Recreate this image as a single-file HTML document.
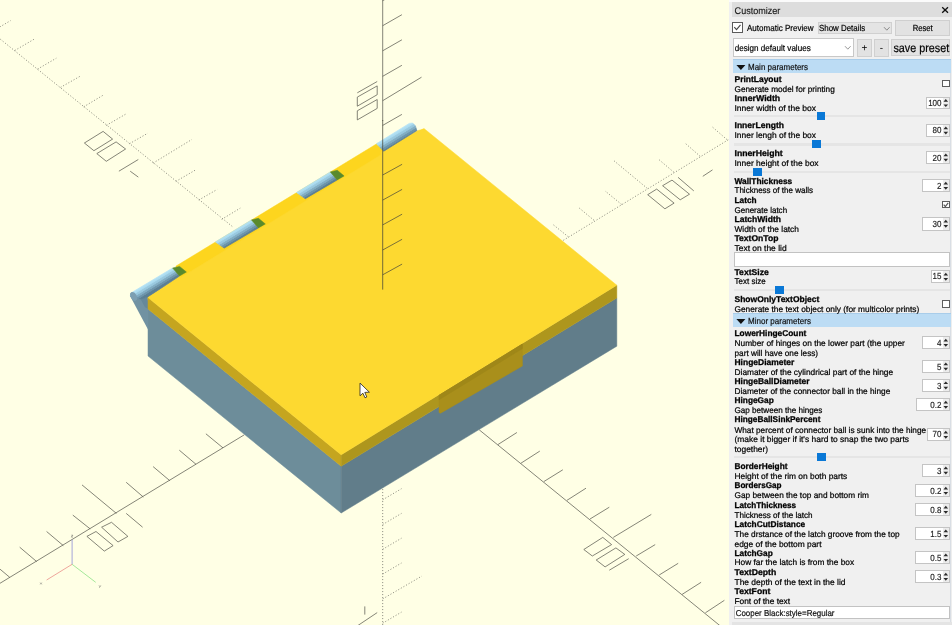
<!DOCTYPE html>
<html><head><meta charset="utf-8"><title>OpenSCAD</title>
<style>
html,body{margin:0;padding:0;}
body{width:952px;height:625px;overflow:hidden;position:relative;background:#f0f0f0;font-family:"Liberation Sans",sans-serif;}
#vp{position:absolute;left:0;top:0;width:729px;height:625px;background:#ffffe5;overflow:hidden}
#sep{position:absolute;left:731.6px;top:59px;width:1px;height:566px;background:#c3cfdc}
#panel{position:absolute;left:729px;top:0;width:223px;height:625px;background:#f0f0f0}
#edge{position:absolute;left:950.4px;top:59px;width:1.6px;height:566px;background:#eeeeee;border-left:1px solid #d9dee4;box-sizing:border-box}
#tx{position:absolute;left:0;top:0;font-family:"Liberation Sans",sans-serif;text-rendering:geometricPrecision;will-change:transform;}
</style></head><body>
<div id="vp"><svg width="731" height="625" viewBox="0 0 731 625">
<line x1="-2.0" y1="584.5" x2="244.3" y2="434.8" stroke="#505048" stroke-width="0.7" stroke-opacity="1"/>
<line x1="9.8" y1="577.4" x2="-7.2" y2="563.1" stroke="#505048" stroke-width="0.7" stroke-opacity="1"/>
<line x1="36.7" y1="561.6" x2="19.7" y2="547.2" stroke="#505048" stroke-width="0.7" stroke-opacity="1"/>
<line x1="63.3" y1="545.6" x2="46.6" y2="531.5" stroke="#505048" stroke-width="0.7" stroke-opacity="1"/>
<line x1="90.2" y1="528.9" x2="72.8" y2="515.1" stroke="#505048" stroke-width="0.7" stroke-opacity="1"/>
<line x1="116.4" y1="513.4" x2="82.0" y2="484.9" stroke="#505048" stroke-width="0.7" stroke-opacity="1"/>
<line x1="143.3" y1="497.0" x2="126.2" y2="482.3" stroke="#505048" stroke-width="0.7" stroke-opacity="1"/>
<line x1="169.8" y1="480.7" x2="153.1" y2="466.6" stroke="#505048" stroke-width="0.7" stroke-opacity="1"/>
<line x1="196.0" y1="464.3" x2="179.3" y2="450.2" stroke="#505048" stroke-width="0.7" stroke-opacity="1"/>
<line x1="223.0" y1="447.9" x2="205.9" y2="433.8" stroke="#505048" stroke-width="0.7" stroke-opacity="1"/>
<line x1="126.2" y1="513.4" x2="142.6" y2="527.2" stroke="#505048" stroke-width="0.7" stroke-opacity="1"/>
<polygon points="101.6,527.2 111.5,522.3 127.9,536.4 118.0,542.0" fill="none" stroke="#505048" stroke-width="0.7"/>
<polygon points="86.9,536.4 96.0,531.5 113.1,545.6 104.3,551.1" fill="none" stroke="#505048" stroke-width="0.7"/>
<line x1="479.2" y1="429.8" x2="721.0" y2="626.5" stroke="#505048" stroke-width="0.7" stroke-opacity="1"/>
<line x1="497.9" y1="444.6" x2="516.9" y2="432.5" stroke="#505048" stroke-width="0.7" stroke-opacity="1"/>
<line x1="520.8" y1="463.3" x2="539.8" y2="451.1" stroke="#505048" stroke-width="0.7" stroke-opacity="1"/>
<line x1="543.8" y1="481.6" x2="562.8" y2="469.8" stroke="#505048" stroke-width="0.7" stroke-opacity="1"/>
<line x1="567.0" y1="500.3" x2="586.0" y2="488.2" stroke="#505048" stroke-width="0.7" stroke-opacity="1"/>
<line x1="590.0" y1="519.0" x2="609.3" y2="507.2" stroke="#505048" stroke-width="0.7" stroke-opacity="1"/>
<line x1="613.3" y1="537.4" x2="651.3" y2="514.4" stroke="#505048" stroke-width="0.7" stroke-opacity="1"/>
<line x1="636.2" y1="556.0" x2="655.2" y2="544.6" stroke="#505048" stroke-width="0.7" stroke-opacity="1"/>
<line x1="659.2" y1="575.0" x2="678.2" y2="563.3" stroke="#505048" stroke-width="0.7" stroke-opacity="1"/>
<line x1="682.1" y1="594.4" x2="701.1" y2="582.3" stroke="#505048" stroke-width="0.7" stroke-opacity="1"/>
<line x1="705.4" y1="612.8" x2="724.4" y2="600.3" stroke="#505048" stroke-width="0.7" stroke-opacity="1"/>
<polygon points="583.8,549.5 602.8,537.4 611.6,544.6 592.3,556.0" fill="none" stroke="#505048" stroke-width="0.7"/>
<polygon points="596.2,560.0 615.9,547.9 624.8,554.4 605.1,566.9" fill="none" stroke="#505048" stroke-width="0.7"/>
<line x1="609.3" y1="570.2" x2="628.7" y2="558.7" stroke="#505048" stroke-width="0.7" stroke-opacity="1"/>
<line x1="-2.0" y1="37.3" x2="232.2" y2="226.4" stroke="#74746a" stroke-width="0.8" stroke-dasharray="1.1 1.9" stroke-opacity="1"/>
<line x1="-8.0" y1="31.5" x2="10.6" y2="20.6" stroke="#74746a" stroke-width="0.8" stroke-dasharray="1.1 1.9" stroke-opacity="1"/>
<line x1="14.8" y1="50.5" x2="34.1" y2="39.2" stroke="#74746a" stroke-width="0.8" stroke-dasharray="1.1 1.9" stroke-opacity="1"/>
<line x1="37.6" y1="69.1" x2="56.3" y2="58.2" stroke="#74746a" stroke-width="0.8" stroke-dasharray="1.1 1.9" stroke-opacity="1"/>
<line x1="60.5" y1="87.4" x2="80.2" y2="76.2" stroke="#74746a" stroke-width="0.8" stroke-dasharray="1.1 1.9" stroke-opacity="1"/>
<line x1="83.7" y1="106.8" x2="103.1" y2="95.2" stroke="#74746a" stroke-width="0.8" stroke-dasharray="1.1 1.9" stroke-opacity="1"/>
<line x1="106.3" y1="125.4" x2="125.6" y2="114.2" stroke="#74746a" stroke-width="0.8" stroke-dasharray="1.1 1.9" stroke-opacity="1"/>
<line x1="129.5" y1="143.7" x2="147.8" y2="133.2" stroke="#74746a" stroke-width="0.8" stroke-dasharray="1.1 1.9" stroke-opacity="1"/>
<line x1="153.1" y1="163.1" x2="191.8" y2="139.5" stroke="#74746a" stroke-width="0.8" stroke-dasharray="1.1 1.9" stroke-opacity="1"/>
<line x1="175.9" y1="181.4" x2="195.3" y2="170.1" stroke="#74746a" stroke-width="0.8" stroke-dasharray="1.1 1.9" stroke-opacity="1"/>
<line x1="198.8" y1="200.0" x2="217.1" y2="189.5" stroke="#74746a" stroke-width="0.8" stroke-dasharray="1.1 1.9" stroke-opacity="1"/>
<line x1="221.7" y1="219.4" x2="240.3" y2="208.1" stroke="#74746a" stroke-width="0.8" stroke-dasharray="1.1 1.9" stroke-opacity="1"/>
<polygon points="84.4,143.0 103.1,131.4 112.6,139.1 93.9,150.7" fill="none" stroke="#505048" stroke-width="0.7"/>
<polygon points="96.8,153.6 116.1,141.9 125.6,149.0 106.3,161.3" fill="none" stroke="#505048" stroke-width="0.7"/>
<line x1="118.9" y1="171.2" x2="138.3" y2="159.5" stroke="#505048" stroke-width="0.7" stroke-opacity="1"/>
<line x1="130.2" y1="171.2" x2="138.3" y2="177.1" stroke="#505048" stroke-width="0.7" stroke-opacity="1"/>
<line x1="563.3" y1="240.3" x2="730.5" y2="138.4" stroke="#74746a" stroke-width="0.8" stroke-dasharray="1.1 1.9" stroke-opacity="1"/>
<line x1="568.4" y1="236.9" x2="552.5" y2="224.1" stroke="#74746a" stroke-width="0.8" stroke-dasharray="1.1 1.9" stroke-opacity="1"/>
<line x1="594.0" y1="220.3" x2="578.6" y2="207.5" stroke="#74746a" stroke-width="0.8" stroke-dasharray="1.1 1.9" stroke-opacity="1"/>
<line x1="621.6" y1="204.4" x2="605.0" y2="190.9" stroke="#74746a" stroke-width="0.8" stroke-dasharray="1.1 1.9" stroke-opacity="1"/>
<line x1="647.2" y1="188.3" x2="613.2" y2="160.1" stroke="#74746a" stroke-width="0.8" stroke-dasharray="1.1 1.9" stroke-opacity="1"/>
<line x1="673.8" y1="172.2" x2="658.7" y2="159.4" stroke="#74746a" stroke-width="0.8" stroke-dasharray="1.1 1.9" stroke-opacity="1"/>
<line x1="700.2" y1="156.3" x2="684.9" y2="143.0" stroke="#74746a" stroke-width="0.8" stroke-dasharray="1.1 1.9" stroke-opacity="1"/>
<line x1="727.1" y1="139.7" x2="711.7" y2="126.4" stroke="#74746a" stroke-width="0.8" stroke-dasharray="1.1 1.9" stroke-opacity="1"/>
<polygon points="647.7,194.7 656.7,189.1 674.1,203.1 664.9,208.8" fill="none" stroke="#505048" stroke-width="0.7"/>
<polygon points="662.6,185.7 672.0,180.1 689.5,194.2 680.2,199.8" fill="none" stroke="#505048" stroke-width="0.7"/>
<line x1="678.0" y1="177.3" x2="693.8" y2="190.9" stroke="#505048" stroke-width="0.7" stroke-opacity="1"/>
<line x1="702.8" y1="176.3" x2="712.5" y2="169.9" stroke="#505048" stroke-width="0.7" stroke-opacity="1"/>
<line x1="382.7" y1="489.0" x2="382.7" y2="626.0" stroke="#74746a" stroke-width="0.8" stroke-dasharray="1.1 1.9" stroke-opacity="1"/>
<line x1="382.7" y1="499.8" x2="401.5" y2="488.7" stroke="#74746a" stroke-width="0.8" stroke-dasharray="1.1 1.9" stroke-opacity="1"/>
<line x1="382.7" y1="524.5" x2="401.5" y2="513.4" stroke="#74746a" stroke-width="0.8" stroke-dasharray="1.1 1.9" stroke-opacity="1"/>
<line x1="382.7" y1="549.3" x2="401.5" y2="538.2" stroke="#74746a" stroke-width="0.8" stroke-dasharray="1.1 1.9" stroke-opacity="1"/>
<line x1="382.7" y1="574.1" x2="401.5" y2="563.0" stroke="#74746a" stroke-width="0.8" stroke-dasharray="1.1 1.9" stroke-opacity="1"/>
<line x1="382.7" y1="623.2" x2="401.5" y2="612.1" stroke="#74746a" stroke-width="0.8" stroke-dasharray="1.1 1.9" stroke-opacity="1"/>
<line x1="382.7" y1="598.9" x2="421.8" y2="576.1" stroke="#74746a" stroke-width="0.8" stroke-dasharray="1.1 1.9" stroke-opacity="1"/>
<line x1="364.8" y1="606.4" x2="364.8" y2="614.6" stroke="#505048" stroke-width="0.7" stroke-opacity="1"/>
<line x1="357.9" y1="625.5" x2="377.2" y2="612.6" stroke="#505048" stroke-width="0.7" stroke-opacity="1"/>
<line x1="382.7" y1="-1.0" x2="382.7" y2="121.0" stroke="#505048" stroke-width="0.7" stroke-opacity="1"/>
<line x1="382.7" y1="0.7" x2="401.9" y2="-10.3" stroke="#505048" stroke-width="0.7" stroke-opacity="1"/>
<line x1="382.7" y1="25.7" x2="401.9" y2="14.7" stroke="#505048" stroke-width="0.7" stroke-opacity="1"/>
<line x1="382.7" y1="50.8" x2="401.9" y2="39.8" stroke="#505048" stroke-width="0.7" stroke-opacity="1"/>
<line x1="382.7" y1="76.3" x2="401.9" y2="65.3" stroke="#505048" stroke-width="0.7" stroke-opacity="1"/>
<line x1="382.7" y1="125.4" x2="401.9" y2="114.4" stroke="#505048" stroke-width="0.7" stroke-opacity="1"/>
<line x1="382.7" y1="100.7" x2="421.5" y2="77.2" stroke="#505048" stroke-width="0.7" stroke-opacity="1"/>
<line x1="357.3" y1="92.8" x2="377.2" y2="81.5" stroke="#505048" stroke-width="0.7" stroke-opacity="1"/>
<polygon points="357.3,97.1 377.2,85.9 377.2,94.7 357.3,106.2" fill="none" stroke="#505048" stroke-width="0.7"/>
<polygon points="357.3,110.8 377.2,99.5 377.2,108.4 357.3,119.9" fill="none" stroke="#505048" stroke-width="0.7"/>
<line x1="72.1" y1="564.3" x2="72.1" y2="539.7" stroke="#6666d0" stroke-width="0.6" stroke-opacity="1"/>
<line x1="72.1" y1="564.3" x2="46.6" y2="580.0" stroke="#e36a6a" stroke-width="0.6" stroke-opacity="1"/>
<line x1="72.1" y1="564.3" x2="95.7" y2="582.3" stroke="#66d866" stroke-width="0.6" stroke-opacity="1"/>
<path d="M71.3,535.2 h1.6 l-1.6,1.9 h1.6" stroke="#444" stroke-width="0.45" fill="none"/>
<path d="M40.2,582.6 l1.6,1.8 m0,-1.8 l-1.6,1.8" stroke="#555" stroke-width="0.45" fill="none"/>
<path d="M99.0,585.4 l0.9,1.3 m0.9,-1.3 l-1.5,2.4" stroke="#555" stroke-width="0.45" fill="none"/>
<polygon points="148.0,309.0 341.2,466.2 341.2,513.0 148.0,356.0" fill="#6d8d9a" stroke="#6d8d9a" stroke-width="0.5" stroke-linejoin="round" />
<polygon points="341.2,466.2 616.8,298.0 616.8,346.2 341.2,513.0" fill="#617d8a" stroke="#617d8a" stroke-width="0.5" stroke-linejoin="round" />
<path d="M130.2,296.2 Q129.8,292.2 133.2,291.8 L141,297 L148.3,308 L148.3,330 Z" fill="#7192a2"/>
<path d="M140.3,298.4 L148.3,296.8 L148.3,309 L144.8,307 Z" fill="#66889a"/>
<polygon points="176.0,266.1 378.0,143.0 396.0,148.7 176.0,284.4" fill="#fdd51e" stroke="#fdd51e" stroke-width="0.5" stroke-linejoin="round" />
<defs><linearGradient id="cg0" gradientUnits="userSpaceOnUse" x1="131.70" y1="292.90" x2="136.85" y2="301.35"><stop offset="0" stop-color="#b4e2f5"/><stop offset="0.22" stop-color="#aadaee"/><stop offset="0.28" stop-color="#9bcbe1"/><stop offset="0.45" stop-color="#97c6dc"/><stop offset="0.5" stop-color="#84b0c6"/><stop offset="0.66" stop-color="#80abc1"/><stop offset="0.7" stop-color="#6f97ad"/><stop offset="0.86" stop-color="#6b92a8"/><stop offset="0.9" stop-color="#5d8196"/><stop offset="1" stop-color="#5b7e93"/></linearGradient></defs>
<polygon points="147.6,296.8 179.5,276.0 183.5,281.0 148.5,301.0" fill="#fdd930" stroke="#fdd930" stroke-width="0.5" stroke-linejoin="round" />
<polygon points="130.2,295.6 132.6,292.0 172.6,268.0 179.5,276.0 147.6,297.2 140.5,298.9" fill="url(#cg0)" stroke="url(#cg0)" stroke-width="0.7" stroke-linejoin="round"/>
<polygon points="172.6,268.0 179.6,266.4 186.4,272.0 179.5,276.0" fill="#5a8a2c" stroke="#5a8a2c" stroke-width="0.5" stroke-linejoin="round" />
<defs><linearGradient id="cg1" gradientUnits="userSpaceOnUse" x1="215.40" y1="241.88" x2="220.55" y2="250.34"><stop offset="0" stop-color="#b4e2f5"/><stop offset="0.22" stop-color="#aadaee"/><stop offset="0.28" stop-color="#9bcbe1"/><stop offset="0.45" stop-color="#97c6dc"/><stop offset="0.5" stop-color="#84b0c6"/><stop offset="0.66" stop-color="#80abc1"/><stop offset="0.7" stop-color="#6f97ad"/><stop offset="0.86" stop-color="#6b92a8"/><stop offset="0.9" stop-color="#5d8196"/><stop offset="1" stop-color="#5b7e93"/></linearGradient></defs>
<polygon points="215.4,241.9 251.5,219.9 258.4,227.9 224.2,248.1" fill="url(#cg1)" stroke="url(#cg1)" stroke-width="0.7" stroke-linejoin="round"/>
<polygon points="251.5,219.9 258.5,218.3 265.3,223.9 258.4,227.9" fill="#5a8a2c" stroke="#5a8a2c" stroke-width="0.5" stroke-linejoin="round" />
<defs><linearGradient id="cg2" gradientUnits="userSpaceOnUse" x1="296.50" y1="192.45" x2="301.65" y2="200.91"><stop offset="0" stop-color="#b4e2f5"/><stop offset="0.22" stop-color="#aadaee"/><stop offset="0.28" stop-color="#9bcbe1"/><stop offset="0.45" stop-color="#97c6dc"/><stop offset="0.5" stop-color="#84b0c6"/><stop offset="0.66" stop-color="#80abc1"/><stop offset="0.7" stop-color="#6f97ad"/><stop offset="0.86" stop-color="#6b92a8"/><stop offset="0.9" stop-color="#5d8196"/><stop offset="1" stop-color="#5b7e93"/></linearGradient></defs>
<polygon points="296.5,192.5 330.3,171.9 337.2,179.9 305.3,198.7" fill="url(#cg2)" stroke="url(#cg2)" stroke-width="0.7" stroke-linejoin="round"/>
<polygon points="330.3,171.9 337.3,170.3 344.1,175.9 337.2,179.9" fill="#5a8a2c" stroke="#5a8a2c" stroke-width="0.5" stroke-linejoin="round" />
<defs><linearGradient id="cg3" gradientUnits="userSpaceOnUse" x1="376.40" y1="143.76" x2="381.81" y2="152.64"><stop offset="0" stop-color="#b4e2f5"/><stop offset="0.22" stop-color="#aadaee"/><stop offset="0.28" stop-color="#9bcbe1"/><stop offset="0.45" stop-color="#97c6dc"/><stop offset="0.5" stop-color="#84b0c6"/><stop offset="0.66" stop-color="#80abc1"/><stop offset="0.7" stop-color="#6f97ad"/><stop offset="0.86" stop-color="#6b92a8"/><stop offset="0.9" stop-color="#5d8196"/><stop offset="1" stop-color="#5b7e93"/></linearGradient></defs>
<polygon points="381.0,151.4 417.2,130.8 423.6,129.0 424.0,131.5 381.0,156.3" fill="#fdd930" stroke="#fdd930" stroke-width="0.5" stroke-linejoin="round" />
<polygon points="376.4,143.8 409.3,123.4 412.6,123.0 415.4,125.8 416.8,130.6 383.8,151.2" fill="url(#cg3)" stroke="url(#cg3)" stroke-width="0.7" stroke-linejoin="round"/>
<ellipse cx="133.7" cy="296.4" rx="3.0" ry="4.7" transform="rotate(-28 133.7 296.4)" fill="#7c9fb2"/>
<polygon points="148.0,297.6 341.2,454.8 341.2,466.2 148.0,309.0" fill="#c5a51f" stroke="#c5a51f" stroke-width="0.5" stroke-linejoin="round" />
<polygon points="341.2,454.8 616.8,285.2 616.8,298.0 341.2,466.2" fill="#ae961d" stroke="#ae961d" stroke-width="0.5" stroke-linejoin="round" />
<polygon points="148.0,297.6 424.0,128.5 616.8,285.2 341.2,454.8" fill="#fdd930" stroke="#fdd930" stroke-width="0.5" stroke-linejoin="round" />
<polygon points="439.0,395.3 522.4,344.1 522.4,366.0 440.5,413.2 439.0,412.5" fill="#a98f1b" stroke="#a98f1b" stroke-width="0.5" stroke-linejoin="round" />
<polygon points="439.0,395.3 522.4,344.1 522.4,348.5 439.0,399.8" fill="#9f8718" stroke="#9f8718" stroke-width="0.5" stroke-linejoin="round" />
<line x1="382.7" y1="120.0" x2="382.7" y2="289.6" stroke="#45453a" stroke-width="0.75" stroke-opacity="1"/>
<line x1="382.7" y1="175.0" x2="402.1" y2="164.3" stroke="#45453a" stroke-width="0.7" stroke-opacity="1"/>
<line x1="382.7" y1="200.1" x2="402.1" y2="189.4" stroke="#45453a" stroke-width="0.7" stroke-opacity="1"/>
<line x1="382.7" y1="224.9" x2="402.1" y2="214.2" stroke="#45453a" stroke-width="0.7" stroke-opacity="1"/>
<line x1="382.7" y1="250.0" x2="402.1" y2="239.3" stroke="#45453a" stroke-width="0.7" stroke-opacity="1"/>
<line x1="382.7" y1="274.8" x2="402.1" y2="264.1" stroke="#45453a" stroke-width="0.7" stroke-opacity="1"/>
<path d="M360,383.1 L360,395.8 L362.9,393.2 L365,397.8 L366.8,397 L364.8,392.4 L369.4,392.2 Z" fill="#fff" stroke="#222" stroke-width="0.8" stroke-linejoin="round"/>
</svg></div>
<div id="sep"></div>
<div id="panel"></div>
<div id="edge"></div>
<div style="position:absolute;left:729px;top:0;width:223px;height:2px;background:#fbfbfb"></div>
<div style="position:absolute;left:732px;top:2px;width:220px;height:14.8px;background:#dddddd"></div>
<svg style="position:absolute;left:940.5px;top:6px" width="9" height="8"><path d="M1.2,1.2 L7,6.8 M7,1.2 L1.2,6.8" stroke="#111" stroke-width="1.3" fill="none"/></svg>
<div style="position:absolute;left:732.4px;top:22.1px;width:10.6px;height:10.5px;border:1px solid #5a5a5a;background:#fff;box-sizing:border-box"></div>
<svg style="position:absolute;left:732.4px;top:22.1px" width="11" height="11"><path d="M2.3,5.2 L4.5,7.6 L8.5,2.8" stroke="#444" stroke-width="1.1" fill="none"/></svg>
<div style="position:absolute;left:817.5px;top:22px;width:74.5px;height:11.5px;background:#e4e4e4;border:1px solid #d0d0d0;box-sizing:border-box"></div>
<svg style="position:absolute;left:882.5px;top:25.5px" width="8" height="6"><path d="M1,1.2 L3.8,4.2 L6.6,1.2" stroke="#6a6a6a" stroke-width="0.75" fill="none"/></svg>
<div style="position:absolute;left:894.5px;top:20px;width:55.5px;height:16px;background:#e2e2e2;border:1px solid #cfcfcf;box-sizing:border-box"></div>
<div style="position:absolute;left:732.5px;top:38.4px;width:121px;height:18.4px;background:#fff;border:1px solid #c8c8c8;box-sizing:border-box"></div>
<svg style="position:absolute;left:844px;top:44.5px" width="8" height="6"><path d="M1,1.2 L3.8,4.2 L6.6,1.2" stroke="#777" stroke-width="0.75" fill="none"/></svg>
<div style="position:absolute;left:857.3px;top:38.5px;width:14.4px;height:18.2px;background:#e2e2e2;border:1px solid #d0d0d0;box-sizing:border-box"></div>
<div style="position:absolute;left:874.2px;top:38.5px;width:14.6px;height:18.2px;background:#e2e2e2;border:1px solid #d0d0d0;box-sizing:border-box"></div>
<div style="position:absolute;left:891px;top:38.8px;width:59.4px;height:17.6px;background:#e2e2e2;border:1px solid #d0d0d0;box-sizing:border-box"></div>
<div style="position:absolute;left:732.5px;top:59.3px;width:218px;height:14.1px;background:#bcdcf4;border-top:1px solid #a9cdea;box-sizing:border-box"></div>
<svg style="position:absolute;left:735.5px;top:64.0px" width="11" height="8"><path d="M0.4,1.1 L9.4,1.1 L4.9,5.9 Z" fill="#111"/></svg>
<div style="position:absolute;left:732.5px;top:313.2px;width:218px;height:14.2px;background:#bcdcf4;border-top:1px solid #a9cdea;box-sizing:border-box"></div>
<svg style="position:absolute;left:735.5px;top:318.0px" width="11" height="8"><path d="M0.4,1.1 L9.4,1.1 L4.9,5.9 Z" fill="#111"/></svg>
<div style="position:absolute;left:926.4px;top:96.9px;width:23.4px;height:12.3px;background:#fff;border:1px solid #c4c4c4;box-sizing:border-box"></div>
<div style="position:absolute;left:943.3px;top:97.9px;width:5.4px;height:10.3px;background:#ececec"></div>
<svg style="position:absolute;left:943.3px;top:97.9px" width="6" height="10.3"><path d="M0.5,3.8 L2.8,1.1 L5.1,3.8 Z M0.5,6.4 L2.8,9.1 L5.1,6.4 Z" fill="#2a2a2a"/></svg>
<div style="position:absolute;left:926.4px;top:123.7px;width:23.4px;height:13.0px;background:#fff;border:1px solid #c4c4c4;box-sizing:border-box"></div>
<div style="position:absolute;left:943.3px;top:124.7px;width:5.4px;height:11.0px;background:#ececec"></div>
<svg style="position:absolute;left:943.3px;top:124.7px" width="6" height="11.0"><path d="M0.5,4.2 L2.8,1.5 L5.1,4.2 Z M0.5,6.8 L2.8,9.5 L5.1,6.8 Z" fill="#2a2a2a"/></svg>
<div style="position:absolute;left:926.4px;top:151.29999999999998px;width:23.4px;height:13.0px;background:#fff;border:1px solid #c4c4c4;box-sizing:border-box"></div>
<div style="position:absolute;left:943.3px;top:152.3px;width:5.4px;height:11.0px;background:#ececec"></div>
<svg style="position:absolute;left:943.3px;top:152.3px" width="6" height="11.0"><path d="M0.5,4.2 L2.8,1.5 L5.1,4.2 Z M0.5,6.8 L2.8,9.5 L5.1,6.8 Z" fill="#2a2a2a"/></svg>
<div style="position:absolute;left:922.3px;top:178.89999999999998px;width:27.5px;height:13.4px;background:#fff;border:1px solid #c4c4c4;box-sizing:border-box"></div>
<div style="position:absolute;left:943.3px;top:179.9px;width:5.4px;height:11.4px;background:#ececec"></div>
<svg style="position:absolute;left:943.3px;top:179.9px" width="6" height="11.4"><path d="M0.5,4.4 L2.8,1.7 L5.1,4.4 Z M0.5,7.0 L2.8,9.7 L5.1,7.0 Z" fill="#2a2a2a"/></svg>
<div style="position:absolute;left:922.3px;top:217.29999999999998px;width:27.5px;height:13.4px;background:#fff;border:1px solid #c4c4c4;box-sizing:border-box"></div>
<div style="position:absolute;left:943.3px;top:218.3px;width:5.4px;height:11.4px;background:#ececec"></div>
<svg style="position:absolute;left:943.3px;top:218.3px" width="6" height="11.4"><path d="M0.5,4.4 L2.8,1.7 L5.1,4.4 Z M0.5,7.0 L2.8,9.7 L5.1,7.0 Z" fill="#2a2a2a"/></svg>
<div style="position:absolute;left:930.5px;top:269.5px;width:19.3px;height:13.4px;background:#fff;border:1px solid #c4c4c4;box-sizing:border-box"></div>
<div style="position:absolute;left:943.3px;top:270.5px;width:5.4px;height:11.4px;background:#ececec"></div>
<svg style="position:absolute;left:943.3px;top:270.5px" width="6" height="11.4"><path d="M0.5,4.4 L2.8,1.7 L5.1,4.4 Z M0.5,7.0 L2.8,9.7 L5.1,7.0 Z" fill="#2a2a2a"/></svg>
<div style="position:absolute;left:922.3px;top:335.8px;width:27.5px;height:13.4px;background:#fff;border:1px solid #c4c4c4;box-sizing:border-box"></div>
<div style="position:absolute;left:943.3px;top:336.8px;width:5.4px;height:11.4px;background:#ececec"></div>
<svg style="position:absolute;left:943.3px;top:336.8px" width="6" height="11.4"><path d="M0.5,4.4 L2.8,1.7 L5.1,4.4 Z M0.5,7.0 L2.8,9.7 L5.1,7.0 Z" fill="#2a2a2a"/></svg>
<div style="position:absolute;left:922.3px;top:360.09999999999997px;width:27.5px;height:12.9px;background:#fff;border:1px solid #c4c4c4;box-sizing:border-box"></div>
<div style="position:absolute;left:943.3px;top:361.1px;width:5.4px;height:10.9px;background:#ececec"></div>
<svg style="position:absolute;left:943.3px;top:361.1px" width="6" height="10.9"><path d="M0.5,4.2 L2.8,1.5 L5.1,4.2 Z M0.5,6.8 L2.8,9.5 L5.1,6.8 Z" fill="#2a2a2a"/></svg>
<div style="position:absolute;left:922.3px;top:379.3px;width:27.5px;height:12.9px;background:#fff;border:1px solid #c4c4c4;box-sizing:border-box"></div>
<div style="position:absolute;left:943.3px;top:380.3px;width:5.4px;height:10.9px;background:#ececec"></div>
<svg style="position:absolute;left:943.3px;top:380.3px" width="6" height="10.9"><path d="M0.5,4.1 L2.8,1.4 L5.1,4.1 Z M0.5,6.7 L2.8,9.4 L5.1,6.7 Z" fill="#2a2a2a"/></svg>
<div style="position:absolute;left:916px;top:398.0px;width:33.8px;height:13.4px;background:#fff;border:1px solid #c4c4c4;box-sizing:border-box"></div>
<div style="position:absolute;left:943.3px;top:399.0px;width:5.4px;height:11.4px;background:#ececec"></div>
<svg style="position:absolute;left:943.3px;top:399.0px" width="6" height="11.4"><path d="M0.5,4.4 L2.8,1.7 L5.1,4.4 Z M0.5,7.0 L2.8,9.7 L5.1,7.0 Z" fill="#2a2a2a"/></svg>
<div style="position:absolute;left:927px;top:427.5px;width:22.8px;height:13.4px;background:#fff;border:1px solid #c4c4c4;box-sizing:border-box"></div>
<div style="position:absolute;left:943.3px;top:428.5px;width:5.4px;height:11.4px;background:#ececec"></div>
<svg style="position:absolute;left:943.3px;top:428.5px" width="6" height="11.4"><path d="M0.5,4.4 L2.8,1.7 L5.1,4.4 Z M0.5,7.0 L2.8,9.7 L5.1,7.0 Z" fill="#2a2a2a"/></svg>
<div style="position:absolute;left:922px;top:464.3px;width:27.8px;height:13.0px;background:#fff;border:1px solid #c4c4c4;box-sizing:border-box"></div>
<div style="position:absolute;left:943.3px;top:465.3px;width:5.4px;height:11.0px;background:#ececec"></div>
<svg style="position:absolute;left:943.3px;top:465.3px" width="6" height="11.0"><path d="M0.5,4.2 L2.8,1.5 L5.1,4.2 Z M0.5,6.8 L2.8,9.5 L5.1,6.8 Z" fill="#2a2a2a"/></svg>
<div style="position:absolute;left:915.3px;top:483.5px;width:34.5px;height:13.6px;background:#fff;border:1px solid #c4c4c4;box-sizing:border-box"></div>
<div style="position:absolute;left:943.3px;top:484.5px;width:5.4px;height:11.6px;background:#ececec"></div>
<svg style="position:absolute;left:943.3px;top:484.5px" width="6" height="11.6"><path d="M0.5,4.5 L2.8,1.8 L5.1,4.5 Z M0.5,7.1 L2.8,9.8 L5.1,7.1 Z" fill="#2a2a2a"/></svg>
<div style="position:absolute;left:915.3px;top:502.7px;width:34.5px;height:13.6px;background:#fff;border:1px solid #c4c4c4;box-sizing:border-box"></div>
<div style="position:absolute;left:943.3px;top:503.7px;width:5.4px;height:11.6px;background:#ececec"></div>
<svg style="position:absolute;left:943.3px;top:503.7px" width="6" height="11.6"><path d="M0.5,4.5 L2.8,1.8 L5.1,4.5 Z M0.5,7.1 L2.8,9.8 L5.1,7.1 Z" fill="#2a2a2a"/></svg>
<div style="position:absolute;left:915.3px;top:527.0px;width:34.5px;height:13.3px;background:#fff;border:1px solid #c4c4c4;box-sizing:border-box"></div>
<div style="position:absolute;left:943.3px;top:528.0px;width:5.4px;height:11.3px;background:#ececec"></div>
<svg style="position:absolute;left:943.3px;top:528.0px" width="6" height="11.3"><path d="M0.5,4.3 L2.8,1.6 L5.1,4.3 Z M0.5,6.9 L2.8,9.6 L5.1,6.9 Z" fill="#2a2a2a"/></svg>
<div style="position:absolute;left:915.3px;top:550.7px;width:34.5px;height:13.3px;background:#fff;border:1px solid #c4c4c4;box-sizing:border-box"></div>
<div style="position:absolute;left:943.3px;top:551.7px;width:5.4px;height:11.3px;background:#ececec"></div>
<svg style="position:absolute;left:943.3px;top:551.7px" width="6" height="11.3"><path d="M0.5,4.3 L2.8,1.6 L5.1,4.3 Z M0.5,6.9 L2.8,9.6 L5.1,6.9 Z" fill="#2a2a2a"/></svg>
<div style="position:absolute;left:915.3px;top:569.9000000000001px;width:34.5px;height:13.4px;background:#fff;border:1px solid #c4c4c4;box-sizing:border-box"></div>
<div style="position:absolute;left:943.3px;top:570.9px;width:5.4px;height:11.4px;background:#ececec"></div>
<svg style="position:absolute;left:943.3px;top:570.9px" width="6" height="11.4"><path d="M0.5,4.4 L2.8,1.7 L5.1,4.4 Z M0.5,7.0 L2.8,9.7 L5.1,7.0 Z" fill="#2a2a2a"/></svg>
<div style="position:absolute;left:942px;top:79.6px;width:7.6px;height:7.4px;border:1px solid #5e5e5e;background:#fff;box-sizing:border-box"></div>
<div style="position:absolute;left:942px;top:201px;width:7.6px;height:7.4px;border:1px solid #5e5e5e;background:#fff;box-sizing:border-box"></div>
<svg style="position:absolute;left:942px;top:201px" width="8" height="8"><path d="M1.7,3.7 L3.3,5.6 L6.2,1.9" stroke="#555" stroke-width="1.15" fill="none"/></svg>
<div style="position:absolute;left:942px;top:300.3px;width:7.6px;height:7.4px;border:1px solid #5e5e5e;background:#fff;box-sizing:border-box"></div>
<div style="position:absolute;left:734px;top:115.1px;width:215.5px;height:2.4px;background:#e5e5e5"></div>
<div style="position:absolute;left:816.9px;top:112.0px;width:8.5px;height:8.2px;background:#0a78d6"></div>
<div style="position:absolute;left:734px;top:143.3px;width:215.5px;height:2.4px;background:#e5e5e5"></div>
<div style="position:absolute;left:812.2px;top:140.2px;width:8.5px;height:8.2px;background:#0a78d6"></div>
<div style="position:absolute;left:734px;top:170.9px;width:215.5px;height:2.4px;background:#e5e5e5"></div>
<div style="position:absolute;left:753.3px;top:167.8px;width:8.5px;height:8.2px;background:#0a78d6"></div>
<div style="position:absolute;left:734px;top:288.9px;width:215.5px;height:2.4px;background:#e5e5e5"></div>
<div style="position:absolute;left:775px;top:285.8px;width:8.5px;height:8.2px;background:#0a78d6"></div>
<div style="position:absolute;left:734px;top:456.1px;width:215.5px;height:2.4px;background:#e5e5e5"></div>
<div style="position:absolute;left:817px;top:453.0px;width:8.5px;height:8.2px;background:#0a78d6"></div>
<div style="position:absolute;left:734px;top:252.3px;width:215.8px;height:14.3px;background:#fff;border:1px solid #c2c2c2;box-sizing:border-box"></div>
<div style="position:absolute;left:734px;top:606px;width:215.8px;height:13.2px;background:#fff;border:1px solid #c2c2c2;box-sizing:border-box"></div>
<div style="position:absolute;left:732px;top:622px;width:220px;height:3px;background:#e4e4e4"></div>
<svg id="tx" width="952" height="625" viewBox="0 0 952 625">
<text x="734.50" y="81.60" font-size="8.4" font-weight="bold" fill="#000" textLength="47.00" lengthAdjust="spacingAndGlyphs" stroke="#000" stroke-width="0.28" text-anchor="start">PrintLayout</text>
<text x="734.50" y="91.95" font-size="8.3" fill="#000" textLength="100.30" lengthAdjust="spacingAndGlyphs" stroke="#000" stroke-width="0.22" text-anchor="start">Generate model for printing</text>
<text x="734.50" y="100.70" font-size="8.4" font-weight="bold" fill="#000" textLength="45.70" lengthAdjust="spacingAndGlyphs" stroke="#000" stroke-width="0.28" text-anchor="start">InnerWidth</text>
<text x="734.50" y="110.55" font-size="8.3" fill="#000" textLength="81.50" lengthAdjust="spacingAndGlyphs" stroke="#000" stroke-width="0.22" text-anchor="start">Inner width of the box</text>
<text x="734.50" y="128.40" font-size="8.4" font-weight="bold" fill="#000" textLength="49.50" lengthAdjust="spacingAndGlyphs" stroke="#000" stroke-width="0.28" text-anchor="start">InnerLength</text>
<text x="734.50" y="138.25" font-size="8.3" fill="#000" textLength="81.50" lengthAdjust="spacingAndGlyphs" stroke="#000" stroke-width="0.22" text-anchor="start">Inner lengh of the box</text>
<text x="734.50" y="155.90" font-size="8.4" font-weight="bold" fill="#000" textLength="48.20" lengthAdjust="spacingAndGlyphs" stroke="#000" stroke-width="0.28" text-anchor="start">InnerHeight</text>
<text x="734.50" y="166.05" font-size="8.3" fill="#000" textLength="84.10" lengthAdjust="spacingAndGlyphs" stroke="#000" stroke-width="0.22" text-anchor="start">Inner height of the box</text>
<text x="734.50" y="183.70" font-size="8.4" font-weight="bold" fill="#000" textLength="57.70" lengthAdjust="spacingAndGlyphs" stroke="#000" stroke-width="0.28" text-anchor="start">WallThickness</text>
<text x="734.50" y="193.45" font-size="8.3" fill="#000" textLength="78.50" lengthAdjust="spacingAndGlyphs" stroke="#000" stroke-width="0.22" text-anchor="start">Thickness of the walls</text>
<text x="734.50" y="202.90" font-size="8.4" font-weight="bold" fill="#000" textLength="22.10" lengthAdjust="spacingAndGlyphs" stroke="#000" stroke-width="0.28" text-anchor="start">Latch</text>
<text x="734.50" y="212.75" font-size="8.3" fill="#000" textLength="52.60" lengthAdjust="spacingAndGlyphs" stroke="#000" stroke-width="0.22" text-anchor="start">Generate latch</text>
<text x="734.50" y="222.10" font-size="8.4" font-weight="bold" fill="#000" textLength="46.50" lengthAdjust="spacingAndGlyphs" stroke="#000" stroke-width="0.28" text-anchor="start">LatchWidth</text>
<text x="734.50" y="232.15" font-size="8.3" fill="#000" textLength="64.40" lengthAdjust="spacingAndGlyphs" stroke="#000" stroke-width="0.22" text-anchor="start">Width of the latch</text>
<text x="734.50" y="241.30" font-size="8.4" font-weight="bold" fill="#000" textLength="43.90" lengthAdjust="spacingAndGlyphs" stroke="#000" stroke-width="0.28" text-anchor="start">TextOnTop</text>
<text x="734.50" y="251.15" font-size="8.3" fill="#000" textLength="52.10" lengthAdjust="spacingAndGlyphs" stroke="#000" stroke-width="0.22" text-anchor="start">Text on the lid</text>
<text x="734.50" y="274.60" font-size="8.4" font-weight="bold" fill="#000" textLength="34.20" lengthAdjust="spacingAndGlyphs" stroke="#000" stroke-width="0.28" text-anchor="start">TextSize</text>
<text x="734.50" y="284.45" font-size="8.3" fill="#000" textLength="31.10" lengthAdjust="spacingAndGlyphs" stroke="#000" stroke-width="0.22" text-anchor="start">Text size</text>
<text x="734.50" y="302.00" font-size="8.4" font-weight="bold" fill="#000" textLength="84.90" lengthAdjust="spacingAndGlyphs" stroke="#000" stroke-width="0.28" text-anchor="start">ShowOnlyTextObject</text>
<text x="734.50" y="312.05" font-size="8.3" fill="#000" textLength="184.70" lengthAdjust="spacingAndGlyphs" stroke="#000" stroke-width="0.22" text-anchor="start">Generate the text object only (for multicolor prints)</text>
<text x="734.50" y="335.70" font-size="8.4" font-weight="bold" fill="#000" textLength="71.80" lengthAdjust="spacingAndGlyphs" stroke="#000" stroke-width="0.28" text-anchor="start">LowerHingeCount</text>
<text x="734.50" y="346.05" font-size="8.3" fill="#000" textLength="170.40" lengthAdjust="spacingAndGlyphs" stroke="#000" stroke-width="0.22" text-anchor="start">Number of hinges on the lower part (the upper</text>
<text x="734.50" y="355.55" font-size="8.3" fill="#000" textLength="83.60" lengthAdjust="spacingAndGlyphs" stroke="#000" stroke-width="0.22" text-anchor="start">part will have one less)</text>
<text x="734.50" y="364.90" font-size="8.4" font-weight="bold" fill="#000" textLength="59.80" lengthAdjust="spacingAndGlyphs" stroke="#000" stroke-width="0.28" text-anchor="start">HingeDiameter</text>
<text x="734.50" y="374.95" font-size="8.3" fill="#000" textLength="158.60" lengthAdjust="spacingAndGlyphs" stroke="#000" stroke-width="0.22" text-anchor="start">Diamater of the cylindrical part of the hinge</text>
<text x="734.50" y="384.10" font-size="8.4" font-weight="bold" fill="#000" textLength="75.10" lengthAdjust="spacingAndGlyphs" stroke="#000" stroke-width="0.28" text-anchor="start">HingeBallDiameter</text>
<text x="734.50" y="393.95" font-size="8.3" fill="#000" textLength="155.80" lengthAdjust="spacingAndGlyphs" stroke="#000" stroke-width="0.22" text-anchor="start">Diameter of the connector ball in the hinge</text>
<text x="734.50" y="403.30" font-size="8.4" font-weight="bold" fill="#000" textLength="39.30" lengthAdjust="spacingAndGlyphs" stroke="#000" stroke-width="0.28" text-anchor="start">HingeGap</text>
<text x="734.50" y="413.15" font-size="8.3" fill="#000" textLength="87.90" lengthAdjust="spacingAndGlyphs" stroke="#000" stroke-width="0.22" text-anchor="start">Gap between the hinges</text>
<text x="734.50" y="422.30" font-size="8.4" font-weight="bold" fill="#000" textLength="85.90" lengthAdjust="spacingAndGlyphs" stroke="#000" stroke-width="0.28" text-anchor="start">HingeBallSinkPercent</text>
<text x="734.50" y="432.65" font-size="8.3" fill="#000" textLength="191.60" lengthAdjust="spacingAndGlyphs" stroke="#000" stroke-width="0.22" text-anchor="start">What percent of connector ball is sunk into the hinge</text>
<text x="734.50" y="442.05" font-size="8.3" fill="#000" textLength="174.50" lengthAdjust="spacingAndGlyphs" stroke="#000" stroke-width="0.22" text-anchor="start">(make it bigger if it's hard to snap the two parts</text>
<text x="734.50" y="451.55" font-size="8.3" fill="#000" textLength="33.60" lengthAdjust="spacingAndGlyphs" stroke="#000" stroke-width="0.22" text-anchor="start">together)</text>
<text x="734.50" y="469.00" font-size="8.4" font-weight="bold" fill="#000" textLength="53.00" lengthAdjust="spacingAndGlyphs" stroke="#000" stroke-width="0.28" text-anchor="start">BorderHeight</text>
<text x="734.50" y="479.15" font-size="8.3" fill="#000" textLength="112.80" lengthAdjust="spacingAndGlyphs" stroke="#000" stroke-width="0.22" text-anchor="start">Height of the rim on both parts</text>
<text x="734.50" y="488.30" font-size="8.4" font-weight="bold" fill="#000" textLength="47.10" lengthAdjust="spacingAndGlyphs" stroke="#000" stroke-width="0.28" text-anchor="start">BordersGap</text>
<text x="734.50" y="498.35" font-size="8.3" fill="#000" textLength="134.40" lengthAdjust="spacingAndGlyphs" stroke="#000" stroke-width="0.22" text-anchor="start">Gap between the top and bottom rim</text>
<text x="734.50" y="507.50" font-size="8.4" font-weight="bold" fill="#000" textLength="61.60" lengthAdjust="spacingAndGlyphs" stroke="#000" stroke-width="0.28" text-anchor="start">LatchThickness</text>
<text x="734.50" y="517.65" font-size="8.3" fill="#000" textLength="78.10" lengthAdjust="spacingAndGlyphs" stroke="#000" stroke-width="0.22" text-anchor="start">Thickness of the latch</text>
<text x="734.50" y="526.70" font-size="8.4" font-weight="bold" fill="#000" textLength="70.70" lengthAdjust="spacingAndGlyphs" stroke="#000" stroke-width="0.28" text-anchor="start">LatchCutDistance</text>
<text x="734.50" y="536.85" font-size="8.3" fill="#000" textLength="165.10" lengthAdjust="spacingAndGlyphs" stroke="#000" stroke-width="0.22" text-anchor="start">The drstance of the latch groove from the top</text>
<text x="734.50" y="546.65" font-size="8.3" fill="#000" textLength="87.00" lengthAdjust="spacingAndGlyphs" stroke="#000" stroke-width="0.22" text-anchor="start">edge of the bottom part</text>
<text x="734.50" y="555.50" font-size="8.4" font-weight="bold" fill="#000" textLength="38.20" lengthAdjust="spacingAndGlyphs" stroke="#000" stroke-width="0.28" text-anchor="start">LatchGap</text>
<text x="734.50" y="565.25" font-size="8.3" fill="#000" textLength="119.60" lengthAdjust="spacingAndGlyphs" stroke="#000" stroke-width="0.22" text-anchor="start">How far the latch is from the box</text>
<text x="734.50" y="574.70" font-size="8.4" font-weight="bold" fill="#000" textLength="41.70" lengthAdjust="spacingAndGlyphs" stroke="#000" stroke-width="0.28" text-anchor="start">TextDepth</text>
<text x="734.50" y="584.85" font-size="8.3" fill="#000" textLength="111.00" lengthAdjust="spacingAndGlyphs" stroke="#000" stroke-width="0.22" text-anchor="start">The depth of the text in the lid</text>
<text x="734.50" y="593.90" font-size="8.4" font-weight="bold" fill="#000" textLength="35.80" lengthAdjust="spacingAndGlyphs" stroke="#000" stroke-width="0.28" text-anchor="start">TextFont</text>
<text x="734.50" y="604.05" font-size="8.3" fill="#000" textLength="55.60" lengthAdjust="spacingAndGlyphs" stroke="#000" stroke-width="0.22" text-anchor="start">Font of the text</text>
<text x="734.60" y="13.90" font-size="9.7" fill="#1a1a1a" textLength="45.80" lengthAdjust="spacingAndGlyphs" stroke="#1a1a1a" stroke-width="0.15" text-anchor="start">Customizer</text>
<text x="747.00" y="30.90" font-size="8.8" fill="#000" textLength="66.50" lengthAdjust="spacingAndGlyphs" stroke="#000" stroke-width="0.2" text-anchor="start">Automatic Preview</text>
<text x="819.00" y="30.90" font-size="8.8" fill="#000" textLength="46.20" lengthAdjust="spacingAndGlyphs" stroke="#000" stroke-width="0.2" text-anchor="start">Show Details</text>
<text x="912.70" y="31.40" font-size="8.8" fill="#000" textLength="20.00" lengthAdjust="spacingAndGlyphs" stroke="#000" stroke-width="0.2" text-anchor="start">Reset</text>
<text x="734.80" y="51.10" font-size="8.8" fill="#000" textLength="75.90" lengthAdjust="spacingAndGlyphs" stroke="#000" stroke-width="0.2" text-anchor="start">design default values</text>
<text x="861.60" y="51.00" font-size="10" fill="#000" text-anchor="start">+</text>
<text x="879.80" y="51.00" font-size="10" fill="#000" text-anchor="start">-</text>
<text x="893.40" y="51.80" font-size="12.1" fill="#000" textLength="55.80" lengthAdjust="spacingAndGlyphs" stroke="#000" stroke-width="0.2" text-anchor="start">save preset</text>
<text x="748.00" y="70.40" font-size="8.8" fill="#111" textLength="60.00" lengthAdjust="spacingAndGlyphs" stroke="#111" stroke-width="0.2" text-anchor="start">Main parameters</text>
<text x="748.00" y="324.40" font-size="8.8" fill="#111" textLength="62.90" lengthAdjust="spacingAndGlyphs" stroke="#111" stroke-width="0.2" text-anchor="start">Minor parameters</text>
<text x="928.14" y="106.25" font-size="8.9" fill="#1c1c1c" textLength="13.36" lengthAdjust="spacingAndGlyphs" stroke="#1c1c1c" stroke-width="0.15" text-anchor="start">100</text>
<text x="932.59" y="133.40" font-size="8.9" fill="#1c1c1c" textLength="8.91" lengthAdjust="spacingAndGlyphs" stroke="#1c1c1c" stroke-width="0.15" text-anchor="start">80</text>
<text x="932.59" y="161.00" font-size="8.9" fill="#1c1c1c" textLength="8.91" lengthAdjust="spacingAndGlyphs" stroke="#1c1c1c" stroke-width="0.15" text-anchor="start">20</text>
<text x="937.05" y="188.80" font-size="8.9" fill="#1c1c1c" textLength="4.45" lengthAdjust="spacingAndGlyphs" stroke="#1c1c1c" stroke-width="0.15" text-anchor="start">2</text>
<text x="932.59" y="227.20" font-size="8.9" fill="#1c1c1c" textLength="8.91" lengthAdjust="spacingAndGlyphs" stroke="#1c1c1c" stroke-width="0.15" text-anchor="start">30</text>
<text x="932.59" y="279.40" font-size="8.9" fill="#1c1c1c" textLength="8.91" lengthAdjust="spacingAndGlyphs" stroke="#1c1c1c" stroke-width="0.15" text-anchor="start">15</text>
<text x="937.05" y="345.70" font-size="8.9" fill="#1c1c1c" textLength="4.45" lengthAdjust="spacingAndGlyphs" stroke="#1c1c1c" stroke-width="0.15" text-anchor="start">4</text>
<text x="937.05" y="369.75" font-size="8.9" fill="#1c1c1c" textLength="4.45" lengthAdjust="spacingAndGlyphs" stroke="#1c1c1c" stroke-width="0.15" text-anchor="start">5</text>
<text x="937.05" y="388.95" font-size="8.9" fill="#1c1c1c" textLength="4.45" lengthAdjust="spacingAndGlyphs" stroke="#1c1c1c" stroke-width="0.15" text-anchor="start">3</text>
<text x="930.36" y="407.90" font-size="8.9" fill="#1c1c1c" textLength="11.14" lengthAdjust="spacingAndGlyphs" stroke="#1c1c1c" stroke-width="0.15" text-anchor="start">0.2</text>
<text x="932.59" y="437.40" font-size="8.9" fill="#1c1c1c" textLength="8.91" lengthAdjust="spacingAndGlyphs" stroke="#1c1c1c" stroke-width="0.15" text-anchor="start">70</text>
<text x="937.05" y="474.00" font-size="8.9" fill="#1c1c1c" textLength="4.45" lengthAdjust="spacingAndGlyphs" stroke="#1c1c1c" stroke-width="0.15" text-anchor="start">3</text>
<text x="930.36" y="493.50" font-size="8.9" fill="#1c1c1c" textLength="11.14" lengthAdjust="spacingAndGlyphs" stroke="#1c1c1c" stroke-width="0.15" text-anchor="start">0.2</text>
<text x="930.36" y="512.70" font-size="8.9" fill="#1c1c1c" textLength="11.14" lengthAdjust="spacingAndGlyphs" stroke="#1c1c1c" stroke-width="0.15" text-anchor="start">0.8</text>
<text x="930.36" y="536.85" font-size="8.9" fill="#1c1c1c" textLength="11.14" lengthAdjust="spacingAndGlyphs" stroke="#1c1c1c" stroke-width="0.15" text-anchor="start">1.5</text>
<text x="930.36" y="560.55" font-size="8.9" fill="#1c1c1c" textLength="11.14" lengthAdjust="spacingAndGlyphs" stroke="#1c1c1c" stroke-width="0.15" text-anchor="start">0.5</text>
<text x="930.36" y="579.80" font-size="8.9" fill="#1c1c1c" textLength="11.14" lengthAdjust="spacingAndGlyphs" stroke="#1c1c1c" stroke-width="0.15" text-anchor="start">0.3</text>
<text x="735.70" y="615.70" font-size="8.6" fill="#111" textLength="98.80" lengthAdjust="spacingAndGlyphs" stroke="#111" stroke-width="0.2" text-anchor="start">Cooper Black:style=Regular</text>
</svg>
</body></html>
